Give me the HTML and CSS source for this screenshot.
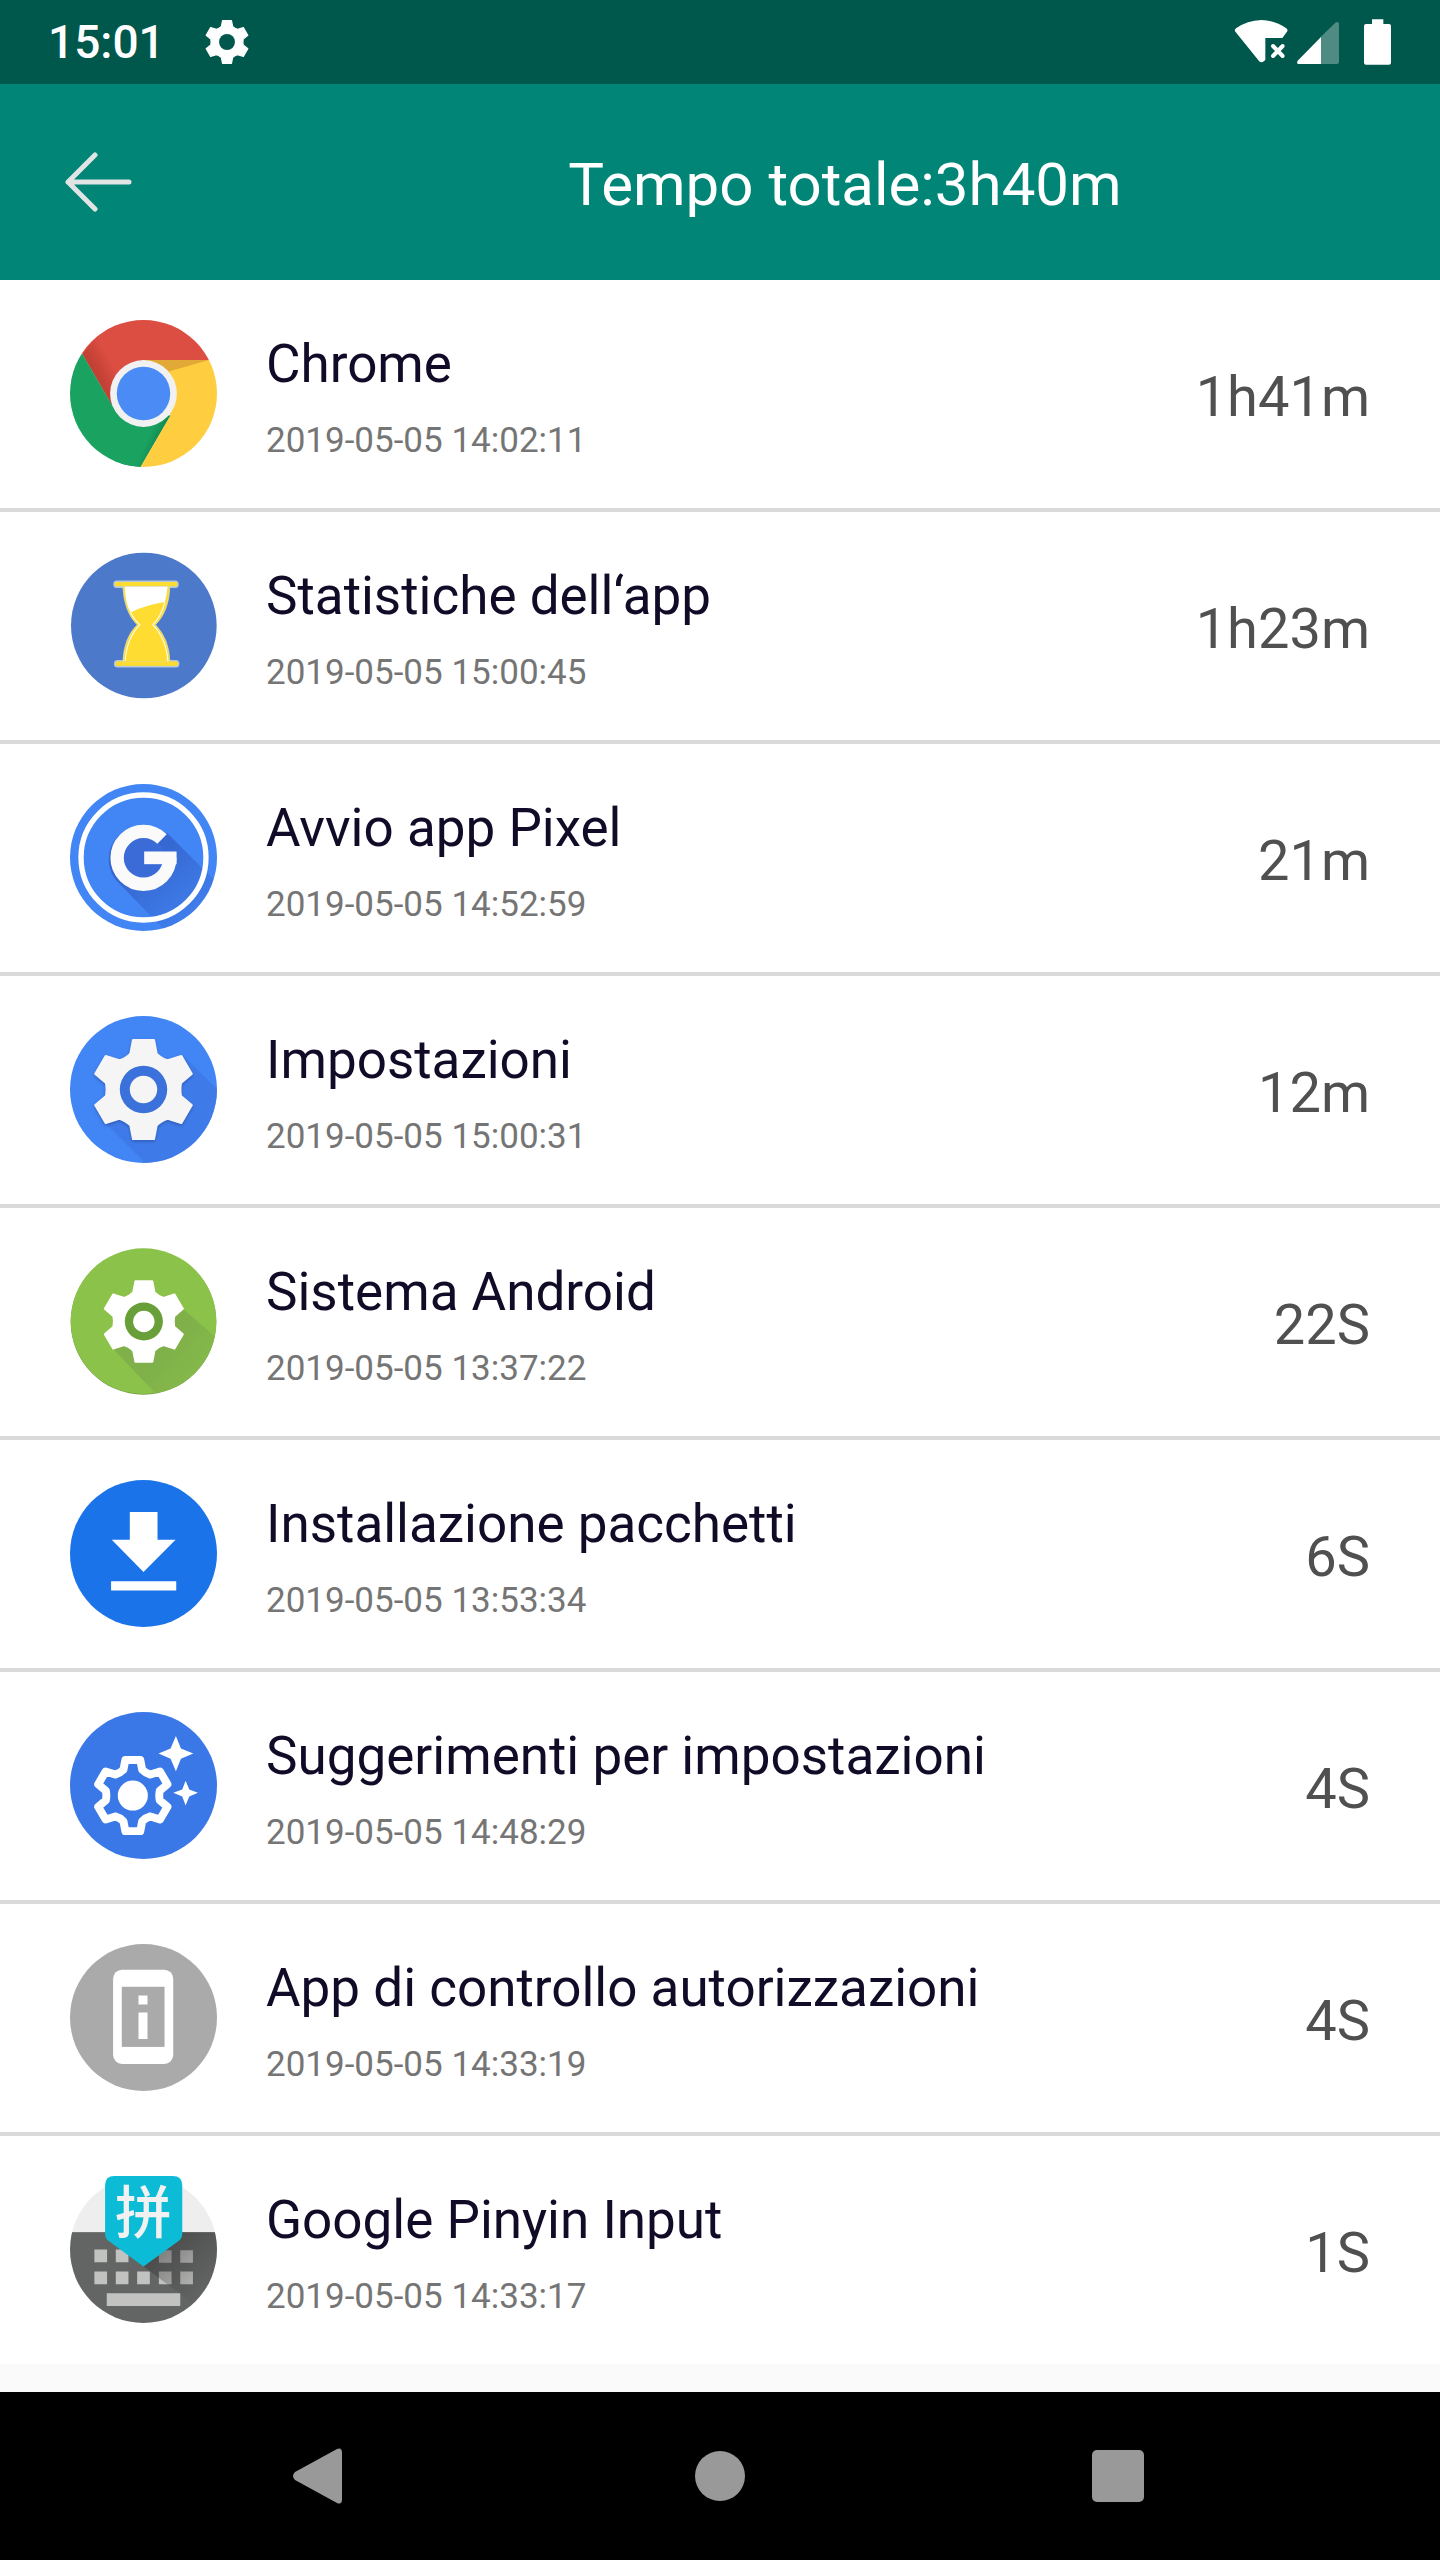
FILE: index.html
```
<!DOCTYPE html>
<html lang="it">
<head>
	<meta charset="utf-8">
	<meta name="viewport" content="width=device-width, initial-scale=1">
	<title>Tempo totale</title>
	<link rel="stylesheet" href="styles.css">
</head>
<body>
	<!-- shapes used by more than one icon -->
	<svg class="defs" width="0" height="0" aria-hidden="true">
		<defs>
			<path id="gear" stroke-linejoin="round" d="M-39-107L-31-148H31L39-107Q54-92 73-87L113-100L144-47L112-20Q108 0 112 20L144 47L113 100L73 87Q54 92 39 107L31 148H-31L-39 107Q-54 92-73 87L-113 100L-144 47L-112 20Q-108 0-112-20L-144-47L-113-100L-73-87Q-54-92-39-107Z"/>
			<linearGradient id="shade" x1="0" y1="0" x2="1" y2="1">
				<stop offset="0.3" stop-color="#1a237e" stop-opacity="0.3"/>
				<stop offset="0.8" stop-color="#1a237e" stop-opacity="0.05"/>
			</linearGradient>
			<clipPath id="round"><circle cx="220" cy="220" r="220"/></clipPath>
		</defs>
	</svg>

	<div class="status">
		<span class="clock">15:01</span>
		<svg class="status-gear" viewBox="-152 -152 304 304"><use href="#gear" fill="#fff" stroke="#fff" stroke-width="8"/><circle r="55" fill="#00574b"/></svg>
		<div class="signals">
			<svg class="wifi" viewBox="160 54 168 144">
				<path fill="#fff" d="M166 94Q164 89 169 85Q203 61 245 60Q286 61 320 85Q325 89 323 94L308 114H257V180Q245 192 238 183Z"/>
				<path fill="none" stroke="#fff" stroke-width="12" stroke-linecap="round" d="M280 138L309 168M309 138L280 168"/>
			</svg>
			<svg class="cell" viewBox="348 54 132 144">
				<path fill="#4f8b82" d="M422 111L466 68Q477 62 477 72V186Q477 192 471 192H422Z"/>
				<path fill="#fff" d="M423 111V192H356Q348 190 353 182Z"/>
			</svg>
			<svg class="battery" viewBox="549 54 87 144">
				<path fill="#fff" d="M576 58H610V72H627Q633 72 633 78V188Q633 194 627 194H558Q552 194 552 188V78Q552 72 558 72H576Z"/>
			</svg>
		</div>
	</div>

	<header>
		<button class="back" type="button" aria-label="Indietro">
			<svg viewBox="0 0 68 60"><path d="M31 3L4 30L31 57M4 30H65" fill="none" stroke="#e0e4e4" stroke-width="5" stroke-linecap="round" stroke-linejoin="round"/></svg>
		</button>
		<h1>Tempo totale:3h40m</h1>
	</header>

	<main>
		<ul class="apps">
			<li>
				<svg class="icon" viewBox="0 0 440 440">
					<defs>
						<linearGradient id="redShade" x1="0.3" y1="0.6" x2="0.55" y2="0.42">
							<stop offset="0" stop-color="#c24034"/>
							<stop offset="1" stop-color="#dc4d42"/>
						</linearGradient>
						<linearGradient id="greenShade" x1="0.5" y1="0.55" x2="0.85" y2="0.7">
							<stop offset="0" stop-color="#1aa260"/>
							<stop offset="1" stop-color="#0c7d48"/>
						</linearGradient>
					</defs>
					<g clip-path="url(#round)">
						<path fill="#dc4d42" d="M0 0H440V120H220L126 255L37 102Z"/>
						<path fill="url(#redShade)" d="M37 102L90 40L200 130L126 255Z"/>
						<path fill="#1aa260" d="M0 60L37 102L126 255L200 300L301 285L211 440H0Z"/>
						<path fill="url(#greenShade)" d="M180 315L301 285L211 440H150Z"/>
						<path fill="#ffcd40" d="M220 120H440V440H211L301 285Z"/>
						<path fill="#e2a937" d="M220 120H416L290 156Z"/>
					</g>
					<circle cx="220" cy="220" r="100" fill="#f1f1f1"/>
					<circle cx="220" cy="220" r="80" fill="#4b8bf5"/>
				</svg>
				<div class="info">
					<h2>Chrome</h2>
					<time>2019-05-05 14:02:11</time>
				</div>
				<span class="used">1h41m</span>
			</li>
			<li>
				<svg class="icon" viewBox="61 65 440 440">
					<circle cx="282" cy="285" r="218" fill="#4d79cb"/>
					<g stroke="#b5c8d9" stroke-width="5">
						<rect x="193" y="153" width="191" height="17" rx="8" fill="#fedc32"/>
						<rect x="195" y="391" width="191" height="17" rx="8" fill="#fedc32"/>
					</g>
					<path fill="#fedc32" stroke="#d4dccf" stroke-width="2" d="M219 168H360Q358 242 317 283Q358 325 360 393H219Q223 320 262 283Q223 245 219 168Z"/>
					<path fill="#fff" d="M225 169H353Q351 193 345 215Q288 224 242 246Q226 216 225 169Z"/>
					<path fill="none" stroke="#fff" stroke-width="3" d="M242 246Q252 266 270 283Q231 322 226 391M345 215Q335 256 309 283Q349 324 354 391"/>
					<path fill="none" stroke="#fedc32" stroke-width="12" stroke-linecap="round" d="M201 161H377M203 399H379"/>
				</svg>
				<div class="info">
					<h2>Statistiche dell‘app</h2>
					<time>2019-05-05 15:00:45</time>
				</div>
				<span class="used">1h23m</span>
			</li>
			<li>
				<svg class="icon" viewBox="0 0 440 440">
					<g clip-path="url(#round)">
						<rect width="440" height="440" fill="#4285f4"/>
						<path fill="url(#shade)" d="M290 146L480 336V440H285L152 302A99 99 0 0 1 150 150Z"/>
					</g>
					<circle cx="220" cy="220" r="187" fill="none" stroke="#fff" stroke-width="16"/>
					<circle cx="220" cy="220" r="64" fill="#3a6bd7"/>
					<circle cx="220" cy="221" r="79" fill="none" stroke="#fafafa" stroke-width="40" stroke-dasharray="431 100"/>
					<rect x="222" y="202" width="97" height="38" fill="#fafafa"/>
				</svg>
				<div class="info">
					<h2>Avvio app Pixel</h2>
					<time>2019-05-05 14:52:59</time>
				</div>
				<span class="used">21m</span>
			</li>
			<li>
				<svg class="icon" viewBox="0 0 440 440">
					<g clip-path="url(#round)">
						<rect width="440" height="440" fill="#4285f4"/>
						<path fill="#3e77e2" fill-opacity="0.65" d="M345 124L460 239V440H225L106 321Z"/>
					</g>
					<g transform="translate(220 220)">
						<use class="gear-shadow" href="#gear" fill="#f5f5f5" stroke="#f5f5f5" stroke-width="7"/>
						<circle r="71" fill="#3b71da"/>
						<circle r="41" fill="#f5f5f5"/>
					</g>
				</svg>
				<div class="info">
					<h2>Impostazioni</h2>
					<time>2019-05-05 15:00:31</time>
				</div>
				<span class="used">12m</span>
			</li>
			<li>
				<svg class="icon" viewBox="0 0 440 440">
					<defs>
						<linearGradient id="leafShade" x1="0.3" y1="0.3" x2="1" y2="0.8">
							<stop offset="0.3" stop-color="#7fb04a"/>
							<stop offset="1" stop-color="#88bd4a"/>
						</linearGradient>
						<clipPath id="leaf"><circle cx="220" cy="219" r="218"/></clipPath>
					</defs>
					<circle cx="220" cy="221" r="218" fill="#6f9c40"/>
					<circle cx="220" cy="219" r="218" fill="#8bc34a"/>
					<path clip-path="url(#leaf)" fill="url(#leafShade)" d="M338 182L440 270V440H260L127 300Z"/>
					<g transform="translate(221 220)">
						<use href="#gear" transform="scale(.81)" fill="#fff" stroke="#fff" stroke-width="8"/>
						<circle r="57" fill="#689f38"/>
						<circle r="32" fill="#fff"/>
					</g>
				</svg>
				<div class="info">
					<h2>Sistema Android</h2>
					<time>2019-05-05 13:37:22</time>
				</div>
				<span class="used">22S</span>
			</li>
			<li>
				<svg class="icon" viewBox="60 60 440 440">
					<circle cx="280" cy="280" r="220" fill="#1a73e8"/>
					<path fill="#fff" d="M239 156H322V239H376L280 335L185 239H239ZM183 363H378V391H183Z"/>
				</svg>
				<div class="info">
					<h2>Installazione pacchetti</h2>
					<time>2019-05-05 13:53:34</time>
				</div>
				<span class="used">6S</span>
			</li>
			<li>
				<svg class="icon" viewBox="60 51 440 440">
					<circle cx="280" cy="271" r="220" fill="#3b78e7"/>
					<g transform="translate(248 301)">
						<use href="#gear" transform="scale(.72)" fill="none" stroke="#fff" stroke-width="33"/>
						<circle r="45" fill="#fff"/>
					</g>
					<path fill="#fff" d="M377 123L392 160L429 175L392 191L377 228L361 191L325 175L361 160ZM406 257L417 283L443 293L417 304L406 331L396 304L369 293L396 283Z"/>
				</svg>
				<div class="info">
					<h2>Suggerimenti per impostazioni</h2>
					<time>2019-05-05 14:48:29</time>
				</div>
				<span class="used">4S</span>
			</li>
			<li>
				<svg class="icon" viewBox="60 57 440 440">
					<circle cx="280" cy="277" r="220" fill="#aaa"/>
					<rect x="189" y="134" width="180" height="282" rx="27" fill="#fff"/>
					<rect x="215" y="185" width="128" height="180" fill="#aaa"/>
					<path fill="#fff" d="M265 211H292V238H265ZM265 262H292V341H265Z"/>
				</svg>
				<div class="info">
					<h2>App di controllo autorizzazioni</h2>
					<time>2019-05-05 14:33:19</time>
				</div>
				<span class="used">4S</span>
			</li>
			<li>
				<svg class="icon" viewBox="60 78 440 440">
					<defs>
						<clipPath id="keys"><circle cx="280" cy="298" r="220"/></clipPath>
						<linearGradient id="keyShade" x1="0" y1="0" x2="1" y2="1">
							<stop offset="0.2" stop-color="#333" stop-opacity="0.5"/>
							<stop offset="0.8" stop-color="#333" stop-opacity="0"/>
						</linearGradient>
					</defs>
					<g clip-path="url(#keys)">
						<rect x="60" y="78" width="440" height="168" fill="#eee"/>
						<rect x="60" y="246" width="440" height="272" fill="#636564"/>
						<path fill="#c2c2c1" d="M133 298h38v38h-38zM197 298h38v38h-38zM326 300h38v38h-38zM390 300h38v38h-38zM133 364h38v38h-38zM197 364h38v38h-38zM261 364h38v38h-38zM326 364h38v38h-38zM390 364h38v38h-38zM170 429h220v38H170z"/>
						<path fill="url(#keyShade)" d="M280 349L395 246H500V490H470Z"/>
					</g>
					<path fill="#0cbcd6" d="M165 106Q165 78 193 78H367Q396 78 396 106V251Q396 264 386 272L280 349L175 272Q165 264 165 251Z"/>
					<text class="pin" x="280" y="249" text-anchor="middle">拼</text>
				</svg>
				<div class="info">
					<h2>Google Pinyin Input</h2>
					<time>2019-05-05 14:33:17</time>
				</div>
				<span class="used">1S</span>
			</li>
		</ul>
	</main>

	<nav>
		<button type="button" aria-label="Indietro"><svg viewBox="0 0 60 60"><path fill="#999" d="M3 26L45 3Q50 1 50 7V53Q50 59 45 57L3 34Q-1 30 3 26Z"/></svg></button>
		<button type="button" aria-label="Home"><svg viewBox="0 0 60 60"><circle cx="30" cy="30" r="25" fill="#999"/></svg></button>
		<button type="button" aria-label="Recenti"><svg viewBox="0 0 60 60"><rect x="4" y="4" width="52" height="52" rx="5" fill="#999"/></svg></button>
	</nav>
</body>
</html>
```
FILE: styles.css
```
html, body {
  margin: 0;
  padding: 0;
}

body {
  min-height: 100vh;
  display: flex;
  flex-direction: column;
  background-color: #fafafa;
  font-family: Roboto, "Noto Sans", sans-serif;
}

h1, h2 {
  margin: 0;
  font-weight: 400;
}

button {
  padding: 0;
  border: 0;
  background: none;
}

svg {
  display: block;
  flex-shrink: 0;
}

.defs {
  position: absolute;
}

/* || status bar */

.status {
  height: 84px;
  padding: 0 48px;
  display: flex;
  align-items: center;
  background-color: #00574b;
}

.clock {
  font-size: 46px;
  font-weight: 500;
  color: white;
}

.status-gear {
  width: 44px;
  height: 44px;
  margin-left: 40px;
}

.signals {
  margin-left: auto;
  display: flex;
}

.signals svg {
  height: 48px;
}

.wifi {
  width: 56px;
}

.cell {
  width: 44px;
  margin-left: 7px;
}

.battery {
  width: 29px;
  margin-left: 23px;
}

/* || header */

header {
  height: 196px;
  display: flex;
  align-items: center;
  background-color: #008577;
}

.back {
  width: 250px;
  height: 100%;
  padding-left: 64px;
}

.back svg {
  width: 68px;
  height: 60px;
}

h1 {
  flex: 1;
  padding-top: 4px;
  text-align: center;
  font-size: 60px;
  color: white;
}

/* || app list */

main {
  flex: 1;
}

.apps {
  margin: 0;
  padding: 0;
  list-style: none;
  background-color: white;
}

.apps li {
  height: 222px;
  padding: 6px 70px 0;
  display: flex;
  align-items: center;
}

.apps li + li {
  border-top: 4px solid #dadada;
}

.icon {
  width: 147px;
  height: 147px;
  margin-bottom: 8px;
  overflow: visible;
}

.gear-shadow {
  filter: drop-shadow(0 5px 5px rgba(20, 40, 110, 0.35));
}

.pin {
  font-family: "Noto Sans CJK SC", sans-serif;
  font-size: 170px;
  font-weight: 500;
  fill: #f1f1f1;
}

.info {
  flex: 1;
  margin-left: 49px;
}

h2 {
  font-size: 53px;
  line-height: 62px;
  color: #120b28;
}

time {
  display: block;
  margin-top: 26px;
  font-size: 35px;
  line-height: 40px;
  color: #757575;
}

.used {
  font-size: 56px;
  color: #505050;
}

/* || navigation bar */

nav {
  height: 168px;
  padding: 0 123px;
  display: flex;
  background-color: black;
}

nav button {
  flex: 1;
  display: flex;
  align-items: center;
  justify-content: center;
}

nav svg {
  width: 60px;
  height: 60px;
}
```
